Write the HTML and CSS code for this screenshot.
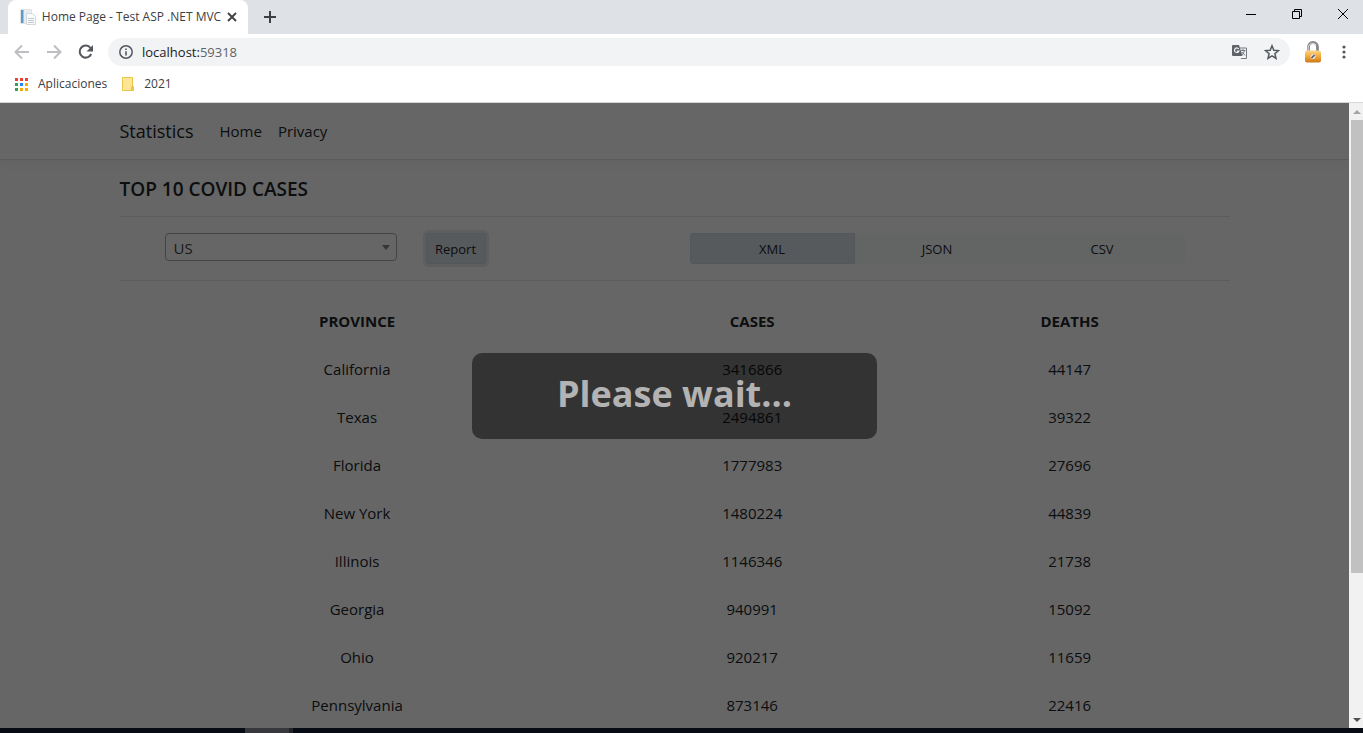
FILE: index.html
```html
<!DOCTYPE html>
<html lang="es">
<head>
<meta charset="utf-8">
<title>Home Page - Test ASP .NET MVC</title>
<link rel="stylesheet" href="styles.css">
</head>
<body>
<header class="browser">
  <div class="tabstrip">
    <div class="tab">
      <svg class="icon" width="16" height="16" viewBox="0 0 16 16"><path fill="#e9edf2" stroke="#dfe3e8" d="M.5.5h11v14H.5z"/><path fill="#5b9bc8" d="M1 1h2.500v13H1z"/><path fill="#f7f9fb" stroke="#d3d8de" d="M6.500 4.500h6l3 3v8h-9z"/><path stroke="#c3cad3" d="M8 9.500h6M8 11.500h6M8 13.500h6"/></svg>
      <span class="tab-title">Home Page - Test ASP .NET MVC</span>
      <button class="plain" aria-label="Close tab"><svg class="icon" width="10" height="10" viewBox="0 0 10 10"><path d="M1 1l8 8M9 1L1 9" stroke="#3c4043" stroke-width="1.800"/></svg></button>
    </div>
    <button class="plain new-tab" aria-label="New tab"><svg class="icon" width="12" height="12" viewBox="0 0 12 12"><path d="M6 0v12M0 6h12" stroke="#3c4043" stroke-width="2"/></svg></button>
    <div class="window-buttons">
      <button class="plain" aria-label="Minimize"><svg class="icon" width="10" height="10" viewBox="0 0 10 10"><path d="M0 5.500h10" stroke="#000"/></svg></button>
      <button class="plain" aria-label="Restore"><svg class="icon" width="10" height="10" viewBox="0 0 10 10"><path d="M.5 2.500h7v7h-7zM2.500 2.500v-2h7v7h-2" fill="none" stroke="#000"/></svg></button>
      <button class="plain" aria-label="Close"><svg class="icon" width="10" height="10" viewBox="0 0 10 10"><path d="M0 0l10 10M10 0L0 10" stroke="#000"/></svg></button>
    </div>
  </div>
  <div class="toolbar">
    <button class="plain" aria-label="Back"><svg class="icon" width="16" height="16" viewBox="0 0 16 16"><path d="M15 8H2M8 1.500L1.500 8 8 14.500" fill="none" stroke="#bcbec1" stroke-width="2"/></svg></button>
    <button class="plain" aria-label="Forward"><svg class="icon" width="16" height="16" viewBox="0 0 16 16"><path d="M1 8h13M8 1.500L14.500 8 8 14.500" fill="none" stroke="#bcbec1" stroke-width="2"/></svg></button>
    <button class="plain" aria-label="Reload"><svg class="icon" width="16" height="16" viewBox="0 0 16 16"><path d="M13.200 10A6 6 0 1 1 12.500 4" fill="none" stroke="#54585d" stroke-width="2"/><path d="M15 1v6.500H8.500z" fill="#54585d"/></svg></button>
    <div class="omnibox">
      <svg class="icon" width="14" height="14" viewBox="0 0 14 14"><circle cx="7" cy="7" r="6.200" fill="none" stroke="#54585d" stroke-width="1.500"/><path d="M7 6.200v4.300M7 3.500v1.500" stroke="#54585d" stroke-width="1.600"/></svg>
      <span class="url">localhost:<span class="port">59318</span></span>
      <svg class="icon" width="15" height="14" viewBox="0 0 15 14"><path d="M8 3h6.500v10.500H8" fill="#f1f3f4" stroke="#777b80"/><path d="M1 0h6l3.500 11H1a1 1 0 0 1-1-1V1a1 1 0 0 1 1-1z" fill="#5f6368"/><path d="M6.800 4A2.300 2.300 0 1 0 7 6H4.800M8 13.500l2.500-2.500" fill="none" stroke="#fff" stroke-width="1.100"/><path d="M9 5.500h4.500M11 4v1.500M12.500 5.500c-.5 2-1.500 3.500-2.500 4.500M10 7l3 3.500" fill="none" stroke="#777b80"/></svg>
      <svg class="icon" width="16" height="16" viewBox="0 0 16 16"><path d="M8 1.800l1.800 4.400 4.700.4-3.600 3.100 1.100 4.600L8 11.800l-4 2.500 1.100-4.600-3.600-3.100 4.700-.4z" fill="none" stroke="#54585d" stroke-width="1.500"/></svg>
    </div>
    <svg class="icon" width="16" height="22" viewBox="0 0 16 22"><defs><linearGradient id="brass" x2="0" y2="1"><stop stop-color="#fbd78c"/><stop offset=".5" stop-color="#f4a83a"/><stop offset="1" stop-color="#c9781b"/></linearGradient></defs><path d="M3.500 11V6a4.500 4.500 0 0 1 9 0v5" fill="none" stroke="#85888b" stroke-width="2.800"/><path d="M3.200 10V6a4.500 4.500 0 0 1 8-2" fill="none" stroke="#d8dadd"/><rect y="9.500" width="16" height="12" rx="2" fill="url(#brass)"/><circle cx="8" cy="15.500" r="2.500" fill="#e4e0cd"/><path d="M6.500 17l3-3" stroke="#46516b" stroke-width="1.500"/></svg>
    <button class="plain menu" aria-label="Menu"><svg class="icon" width="4" height="14" viewBox="0 0 4 14"><g fill="#54585d"><circle cx="2" cy="2" r="1.600"/><circle cx="2" cy="7" r="1.600"/><circle cx="2" cy="12" r="1.600"/></g></svg></button>
  </div>
  <nav class="bookmarks">
    <a href="#"><svg class="icon" width="13" height="13" viewBox="0 0 13 13"><path fill="#ea4335" d="M0 0h3v3H0zM5 0h3v3H5zM10 0h3v3h-3z"/><path fill="#34a058" d="M0 5h3v3H0zM0 10h3v3H0z"/><path fill="#2684fc" d="M5 5h3v3H5z"/><path fill="#fbab00" d="M10 5h3v3h-3zM5 10h3v3H5zM10 10h3v3h-3z"/></svg>Aplicaciones</a>
    <a href="#"><svg class="icon" width="12" height="14" viewBox="0 0 12 14"><path d="M.5.5h10v13H.5zM9.500 13.500v-4h2v4z" fill="#ffe694" stroke="#e8c64d"/></svg>2021</a>
  </nav>
</header>

<div class="viewport">
  <div class="page">
    <header class="navbar">
      <nav class="container nav-row">
        <a class="brand" href="#">Statistics</a>
        <a href="#">Home</a>
        <a href="#">Privacy</a>
      </nav>
    </header>
    <main class="container">
      <h1>TOP 10 COVID CASES</h1>
      <div class="controls">
        <div class="filter">
          <div class="region"><select aria-label="Region"><option>US</option></select></div>
          <button class="report">Report</button>
        </div>
        <div class="formats">
          <button class="active">XML</button>
          <button>JSON</button>
          <button>CSV</button>
        </div>
      </div>
      <table>
        <thead><tr><th class="province">PROVINCE</th><th class="cases">CASES</th><th>DEATHS</th></tr></thead>
        <tbody>
          <tr><td>California</td><td>3416866</td><td>44147</td></tr>
          <tr><td>Texas</td><td>2494861</td><td>39322</td></tr>
          <tr><td>Florida</td><td>1777983</td><td>27696</td></tr>
          <tr><td>New York</td><td>1480224</td><td>44839</td></tr>
          <tr><td>Illinois</td><td>1146346</td><td>21738</td></tr>
          <tr><td>Georgia</td><td>940991</td><td>15092</td></tr>
          <tr><td>Ohio</td><td>920217</td><td>11659</td></tr>
          <tr><td>Pennsylvania</td><td>873146</td><td>22416</td></tr>
        </tbody>
      </table>
    </main>
    <div class="overlay"><div class="dialog" role="status">Please wait...</div></div>
  </div>
  <div class="scrollbar">
    <span class="arrow up"></span>
    <span class="thumb"></span>
    <span class="arrow down"></span>
  </div>
</div>
<footer class="taskbar"><span class="task"></span></footer>
</body>
</html>
```
FILE: styles.css
```css
* { box-sizing: border-box; }

body {
  margin: 0;
  height: 100vh;
  display: flex;
  flex-direction: column;
  overflow: hidden;
  font-family: "Open Sans", "Noto Sans", sans-serif;
  font-size: 15px;
  line-height: 24px;
  color: #212529;
}

a { color: inherit; text-decoration: none; }
button, select { font-family: inherit; color: inherit; }
.icon { display: block; flex: none; }

.plain {
  display: flex;
  padding: 0;
  border: 0;
  background: none;
}

/* Browser frame */
.browser {
  flex: none;
  font-size: 12px;
  line-height: 16px;
  color: #3c4043;
  background: #fff;
  border-bottom: 1px solid #d5d7da;
}

.tabstrip {
  display: flex;
  align-items: center;
  height: 34px;
  padding-left: 8px;
  background: #dee1e6;
}

.tab {
  display: flex;
  align-items: center;
  justify-content: space-between;
  width: 240px;
  height: 34px;
  padding: 0 11px 0 12px;
  background: #fff;
  border-radius: 8px 8px 0 0;
}

.tab-title { white-space: nowrap; }
.new-tab { margin-left: 16px; }

.window-buttons {
  display: flex;
  gap: 36px;
  margin-left: auto;
  padding: 0 15px 6px 0;
}

.toolbar {
  display: flex;
  align-items: center;
  gap: 16px;
  height: 36px;
  padding: 0 17px 0 14px;
}

.omnibox {
  flex: 1;
  display: flex;
  align-items: center;
  gap: 17px;
  height: 28px;
  margin: 0 -1px 0 -2px;
  padding: 0 10px 0 11px;
  background: #f1f3f4;
  border-radius: 14px;
}

.url { flex: 1; margin-left: -8px; font-size: 13px; color: #202124; }
.port { color: #5f6368; }
.menu { margin-left: 5px; }

.bookmarks {
  display: flex;
  gap: 15px;
  height: 32px;
  padding: 6px 15px 10px;
}

.bookmarks a { display: flex; align-items: center; gap: 10px; }

/* Page area */
.viewport { flex: 1; display: flex; min-height: 0; }

.page {
  position: relative;
  flex: 1;
  overflow: hidden;
  background: #fff;
}

.container { max-width: 1140px; margin: 0 auto; padding: 0 15px; }

.navbar {
  border-bottom: 1px solid #dee2e6;
  box-shadow: 0 4px 12px rgba(0, 0, 0, .05);
}

.nav-row {
  display: flex;
  align-items: center;
  gap: 16px;
  height: 56px;
}

.brand { margin-right: 10px; font-size: 18px; }

h1 {
  margin: 0;
  padding: 17px 0 15px;
  font-size: 19px;
  font-weight: 600;
  line-height: 24px;
}

.controls {
  display: grid;
  grid-template-columns: 1fr 1fr;
  gap: 30px;
  padding: 16px 0;
  border-top: 1px solid #e5e5e5;
  border-bottom: 1px solid #e5e5e5;
}

.filter {
  display: flex;
  align-items: flex-start;
  gap: 29px;
  padding-left: 45px;
}

.region { position: relative; flex: 0 1 232px; }

.region::after {
  content: "";
  position: absolute;
  right: 7px;
  top: 12px;
  border: 4px solid transparent;
  border-top: 5px solid #888;
  border-bottom: 0;
}

.region select {
  display: block;
  width: 100%;
  height: 28px;
  padding: 2px 8px 0;
  appearance: none;
  font-size: 15px;
  color: #444;
  background: #fff;
  border: 1px solid #aaa;
  border-radius: 4px;
}

.report, .formats button {
  height: 31px;
  padding: 0 8px;
  font-size: 13px;
  border: 1px solid #f8f9fa;
  background: #f8f9fa;
}

.report {
  width: 60px;
  background: #dae0e5;
  border-color: #d3d9df;
  border-radius: 3px;
  box-shadow: 0 0 0 3px rgba(216, 217, 219, .5);
}

.formats { display: flex; padding-right: 45px; }
.formats button { flex: 1; background: #f8faf9; border-color: #f8faf9; }
.formats button:first-child { border-radius: 3px 0 0 3px; }
.formats button:last-child { border-radius: 0 3px 3px 0; }
.formats .active { background: #dae0e5; border-color: #d3d9df; }

table {
  width: 100%;
  margin-top: 16px;
  border-collapse: collapse;
  table-layout: fixed;
  text-align: center;
}

th, td { height: 48px; padding: 0; }
th { font-weight: 700; }
.province { width: 42.8%; }
.cases { width: 28.4%; }

.overlay {
  position: absolute;
  inset: 0;
  display: flex;
  align-items: flex-start;
  justify-content: center;
  padding-top: 250px;
  background: rgba(0, 0, 0, .6);
}

.dialog {
  width: 30%;
  padding: 17px 0 21px;
  font-size: 36px;
  font-weight: 700;
  line-height: 48px;
  text-align: center;
  color: #b3b3b3;
  background: rgba(0, 0, 0, .5);
  border-radius: 10px;
}

.scrollbar {
  flex: none;
  display: flex;
  flex-direction: column;
  align-items: center;
  width: 14px;
  padding: 7px 0 6px 2px;
  background: #f1f1f1;
}

.arrow { border: 4px solid transparent; }
.up { border-top: 0; border-bottom-color: #a3a3a3; }
.down { margin-top: auto; border-bottom: 0; border-top-color: #505050; }
.thumb { width: 100%; height: 74%; margin-top: 6px; background: #c1c1c1; }

.taskbar { flex: none; height: 5px; padding-left: 245px; background: #060b14; }
.task { display: block; width: 48px; height: 5px; background: #36383d; border-right: 4px solid #222429; }
```
